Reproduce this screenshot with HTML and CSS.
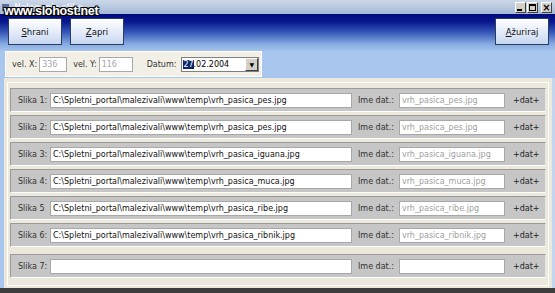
FILE: index.html
```html
<!DOCTYPE html>
<html>
    <head>
        <title>Nalaganje slike</title>
        <link rel="stylesheet" href="styles.css">
    </head>
    <body>
        <div class="window">
            <div class="titlebar">
                <span class="app-icon"></span>
                <span class="title">Nalaganje slike</span>
                <div class="win-btns">
                    <span class="wbtn"><span class="min"></span></span>
                    <span class="wbtn"><span class="max"></span></span>
                    <span class="wbtn close">×</span>
                </div>
            </div>
            <div class="watermark">www.slohost.net</div>

            <div class="header">
                <div class="button-row">
                    <button class="big-btn"><u>S</u>hrani</button>
                    <button class="big-btn"><u>Z</u>apri</button>
                    <span class="spacer"></span>
                    <button class="big-btn"><u>A</u>žuriraj</button>
                </div>
                <div class="toolbar">
                    <label>vel. X:</label>
                    <span class="field small">336</span>
                    <label>vel. Y:</label>
                    <span class="field small wide">116</span>
                    <label class="date-label">Datum:</label>
                    <span class="combo">
                        <span class="combo-text"><span class="sel">27</span>.02.2004</span>
                        <span class="combo-btn">▼</span>
                    </span>
                </div>
            </div>

            <div class="content">
                <div class="rows">
                    <div class="row"><span class="lbl">Slika 1:</span><span class="field path">C:\Spletni_portal\malezivali\www\temp\vrh_pasica_pes.jpg</span><span class="lbl name-lbl">Ime dat.:</span><span class="field name">vrh_pasica_pes.jpg</span><span class="dat">+dat+</span></div>
                    <div class="row"><span class="lbl">Slika 2:</span><span class="field path">C:\Spletni_portal\malezivali\www\temp\vrh_pasica_pes.jpg</span><span class="lbl name-lbl">Ime dat.:</span><span class="field name">vrh_pasica_pes.jpg</span><span class="dat">+dat+</span></div>
                    <div class="row"><span class="lbl">Slika 3:</span><span class="field path">C:\Spletni_portal\malezivali\www\temp\vrh_pasica_iguana.jpg</span><span class="lbl name-lbl">Ime dat.:</span><span class="field name">vrh_pasica_iguana.jpg</span><span class="dat">+dat+</span></div>
                    <div class="row"><span class="lbl">Slika 4:</span><span class="field path">C:\Spletni_portal\malezivali\www\temp\vrh_pasica_muca.jpg</span><span class="lbl name-lbl">Ime dat.:</span><span class="field name">vrh_pasica_muca.jpg</span><span class="dat">+dat+</span></div>
                    <div class="row"><span class="lbl">Slika 5</span><span class="field path">C:\Spletni_portal\malezivali\www\temp\vrh_pasica_ribe.jpg</span><span class="lbl name-lbl">Ime dat.:</span><span class="field name">vrh_pasica_ribe.jpg</span><span class="dat">+dat+</span></div>
                    <div class="row"><span class="lbl">Slika 6:</span><span class="field path">C:\Spletni_portal\malezivali\www\temp\vrh_pasica_ribnik.jpg</span><span class="lbl name-lbl">Ime dat.:</span><span class="field name">vrh_pasica_ribnik.jpg</span><span class="dat">+dat+</span></div>
                    <div class="row last"><span class="lbl">Slika 7:</span><span class="field path"></span><span class="lbl name-lbl">Ime dat.:</span><span class="field name"></span><span class="dat">+dat+</span></div>
                </div>
            </div>
        </div>
    </body>
</html>
```

FILE: styles.css
```css
body {
    margin: 0;
    font-family: "DejaVu Sans", Verdana, sans-serif;
    font-size: 8px;
    color: #222;
    background: #3c3c3c;
}
.window {
    position: relative;
    width: 555px;
    height: 288px;
    overflow: hidden;
    background: #ece9dc;
    display: flex;
    flex-direction: column;
}
.titlebar {
    height: 14px;
    display: flex;
    align-items: center;
    padding: 0 2px;
    background: linear-gradient(to bottom, #ccd8e8, #a4b8d6);
    color: #eef;
    font-size: 8px;
    font-weight: bold;
}
.app-icon {
    width: 7px;
    height: 7px;
    background: #5d7099;
    margin-right: 5px;
}
.title { flex: 1; }
.win-btns { display: flex; gap: 1px; margin-right: 1px; }
.wbtn {
    width: 11px;
    height: 11px;
    box-sizing: border-box;
    background: #d4d0c8;
    border: 1px solid;
    border-color: #fff #404040 #404040 #fff;
    color: #000;
    font-size: 10px;
    font-weight: bold;
    display: flex;
    align-items: center;
    justify-content: center;
}
.wbtn .min {
    width: 5px;
    height: 2px;
    background: #000;
    margin-top: 5px;
    margin-right: 2px;
}
.wbtn .max {
    width: 5px;
    height: 4px;
    border: 1px solid #000;
    border-top-width: 2px;
}
.wbtn.close { margin-left: 2px; }
.watermark {
    position: absolute;
    left: 4px;
    top: 4px;
    font-family: "Liberation Sans", Arial, sans-serif;
    font-weight: bold;
    font-size: 12.5px;
    letter-spacing: -0.3px;
    color: #fff;
    text-shadow: -1px -1px 0 #000, 1px -1px 0 #000, -1px 1px 0 #000, 1px 1px 0 #000, 0 1px 0 #000, 0 -1px 0 #000;
}
.header {
    height: 64px;
    background: linear-gradient(to bottom, #000a7c 0px, #08188e 8px, #3a5cba 19px, #86aae2 30px, #a9c7ee 38px, #a9c7ee 64px);
    padding: 4px 6px 0 5px;
    box-sizing: border-box;
}
.button-row {
    display: flex;
    gap: 8px;
    padding-left: 3px;
}
.spacer { flex: 1; }
.big-btn {
    width: 54px;
    height: 27px;
    border: 1px solid #2c3c5c;
    background: linear-gradient(to bottom, #ffffff, #e2eaf8 55%, #c6d6f0);
    font-family: "DejaVu Sans", Verdana, sans-serif;
    font-size: 8.5px;
    color: #111;
    padding: 0;
}
.toolbar {
    margin-top: 6px;
    width: 257px;
    height: 26px;
    box-sizing: border-box;
    background: #f2f0e6;
    border: 1px solid #fff;
    display: flex;
    align-items: center;
    padding-left: 6px;
    gap: 2px;
    white-space: nowrap;
}
.toolbar label { color: #333; }
.field {
    display: inline-block;
    height: 15px;
    box-sizing: border-box;
    background: #fff;
    border: 1px solid #a8a8a8;
    line-height: 13px;
    padding-left: 2px;
    white-space: nowrap;
    overflow: hidden;
}
.field.small { width: 28px; color: #a8a8a8; margin-right: 4px; }
.field.wide { width: 34px; }
.date-label { margin-left: 8px; margin-right: 3px; }
.combo {
    display: flex;
    width: 78px;
    height: 15px;
    box-sizing: border-box;
    border: 1px solid #7f7f7f;
    background: #fff;
}
.combo-text { flex: 1; line-height: 13px; padding-left: 1px; color: #000; }
.sel { background: #0a246a; color: #fff; }
.combo-btn {
    width: 11px;
    background: #d4d0c8;
    border: 1px solid;
    border-color: #fff #404040 #404040 #fff;
    font-size: 6px;
    line-height: 11px;
    text-align: center;
    color: #000;
}
.content {
    flex: 1;
    border-left: 4px solid #a9c7ee;
    border-right: 3px solid #c4d6ee;
    padding: 4px 3px 2px 3px;
    box-sizing: border-box;
}
.rows {
    height: 100%;
    box-sizing: border-box;
    border: 1px solid #fff;
    padding: 5px 2px 0 2px;
    display: flex;
    flex-direction: column;
    gap: 3px;
}
.row {
    height: 24px;
    box-sizing: border-box;
    background: #c6c6c6;
    border: 1px solid;
    border-color: #9a9a9a #e8e8e8 #ffffff #9a9a9a;
    display: flex;
    align-items: center;
    padding-left: 7px;
    white-space: nowrap;
}
.row.last { margin-top: 4px; }
.lbl { width: 32px; color: #333; }
.field.path { width: 302px; color: #111; }
.name-lbl { width: auto; margin-left: 6px; margin-right: 5px; }
.field.name { width: 106px; color: #a0a0a0; }
.dat { margin-left: 8px; color: #222; }
```
